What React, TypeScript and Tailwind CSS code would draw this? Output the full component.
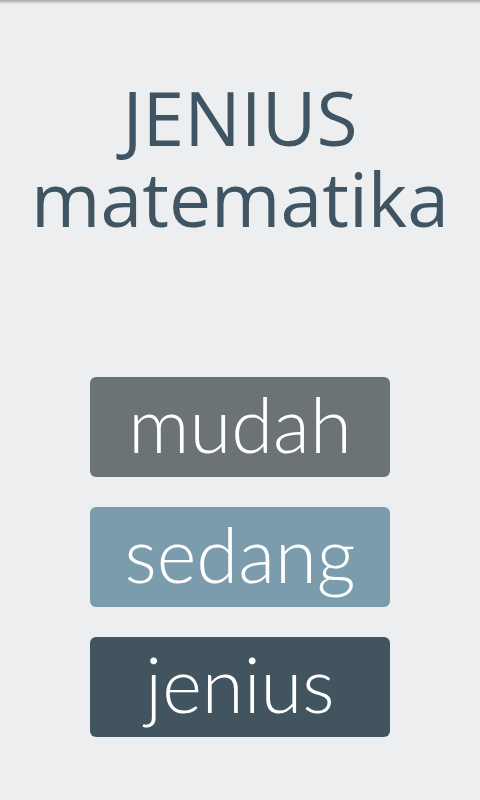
import React from "react";

const levels = [
  { label: "mudah", bg: "bg-[#6b7377]" },
  { label: "sedang", bg: "bg-[#7a9cad]" },
  { label: "jenius", bg: "bg-[#42545f]" },
];

export default function App() {
  return (
    <div className="relative w-[480px] h-[800px] overflow-hidden bg-[#eceef0] flex flex-col items-center">
      <div className="absolute top-0 left-0 right-0 h-[4px] bg-gradient-to-b from-[#a3a5a8] to-[#eceef0]" />
      <div
        className="mt-[77px] flex flex-col items-center text-[#3f5563] leading-[81px]"
        style={{ fontFamily: "'Open Sans', sans-serif" }}
      >
        <div className="text-[75px]">JENIUS</div>
        <div className="text-[75px]">matematika</div>
      </div>
      <div className="mt-[138px] flex flex-col gap-[30px]">
        {levels.map((l) => (
          <button
            key={l.label}
            className={`${l.bg} w-[300px] h-[100px] rounded-[6px] flex items-center justify-center text-white text-[76px] leading-none font-light`}
            style={{ fontFamily: "Lato, sans-serif" }}
          >
            <span className="-mt-[7px]">{l.label}</span>
          </button>
        ))}
      </div>
    </div>
  );
}
